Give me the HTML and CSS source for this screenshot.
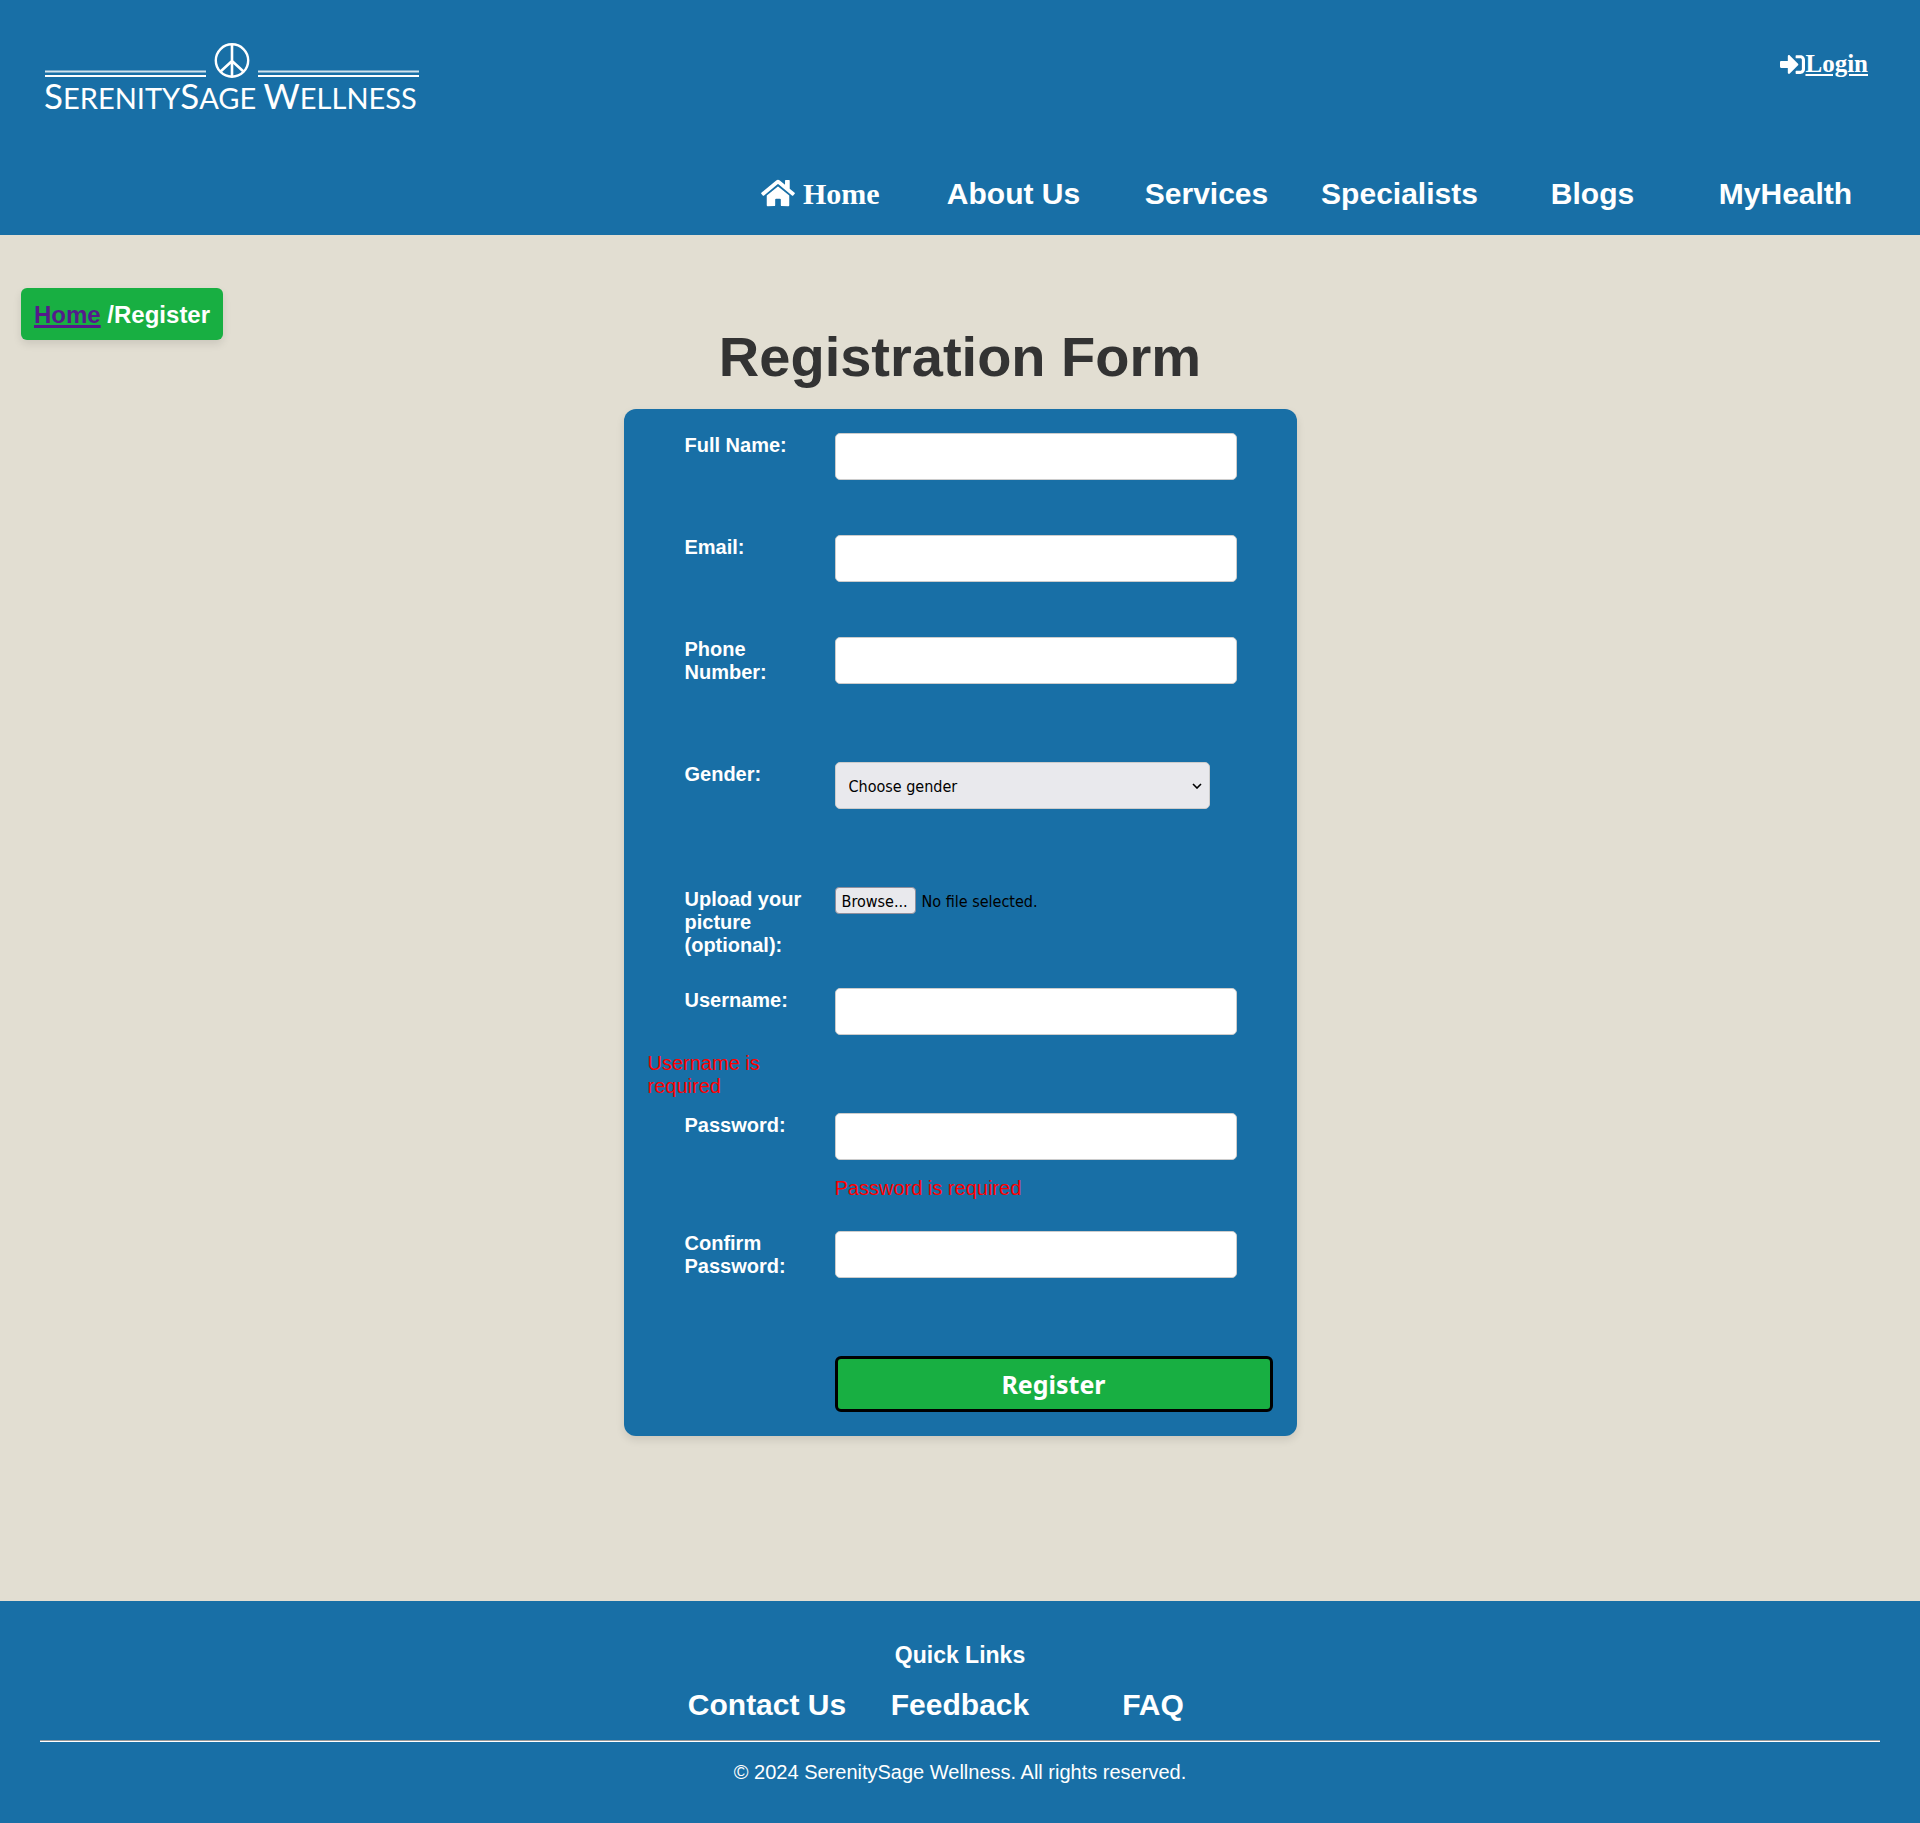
FILE: index.html
```html
<!DOCTYPE html>
<html lang="en">
<head>
<meta charset="utf-8">
<meta name="viewport" content="width=device-width, initial-scale=1">
<title>Register - SerenitySage Wellness</title>
<link rel="stylesheet" href="styles.css">
</head>
<body>
<header class="site-header">
  <div class="header-top">
    <a class="logo" href="#" aria-label="SerenitySage Wellness">
      <svg width="376" height="72" viewBox="0 0 376 72">
        <g fill="none" stroke="#fff">
          <path d="M0 28.5H161M213 28.5H374" stroke-width="2" opacity=".8"/>
          <path d="M0 33H161M213 33H374" stroke-width="2"/>
          <circle cx="187" cy="17.500" r="16.200" stroke-width="2.400"/>
          <path d="M187 1V34M187 18L175 29M187 18L199 29" stroke-width="2.600"/>
        </g>
        <text class="logo-text" x="-1" y="66"><tspan class="logo-cap">S</tspan>ERENITY<tspan class="logo-cap">S</tspan>AGE <tspan class="logo-cap">W</tspan>ELLNESS</text>
      </svg>
    </a>
    <a class="login" href="#"><svg class="login-icon" viewBox="0 0 512 512"><path d="M416 448h-84c-6.600 0-12-5.400-12-12v-40c0-6.600 5.400-12 12-12h84c17.700 0 32-14.300 32-32V160c0-17.700-14.300-32-32-32h-84c-6.600 0-12-5.400-12-12V76c0-6.600 5.400-12 12-12h84c53 0 96 43 96 96v192c0 53-43 96-96 96zm-47-209L201 71c-15-15-41-4.500-41 17v96H24c-13.300 0-24 10.700-24 24v96c0 13.300 10.700 24 24 24h136v96c0 21.500 26 32 41 17l168-168c9.300-9.400 9.300-24.600 0-34z"/></svg><span class="login-text">Login</span></a>
  </div>
  <nav>
    <ul class="nav-list header-nav">
      <li><a class="nav-link nav-home" href="#"><svg class="home-icon" viewBox="0 0 576 512"><path d="M280.370 148.260L96 300.110V464a16 16 0 0 0 16 16l112.060-.290a16 16 0 0 0 15.920-16V368a16 16 0 0 1 16-16h64a16 16 0 0 1 16 16v95.640a16 16 0 0 0 16 16.050L464 480a16 16 0 0 0 16-16V300L295.670 148.260a12.190 12.190 0 0 0-15.300 0zM571.600 251.470L488 182.560V44.050a12 12 0 0 0-12-12h-56a12 12 0 0 0-12 12v72.610L318.470 43a48 48 0 0 0-61 0L4.340 251.470a12 12 0 0 0-1.600 16.900l25.500 31A12 12 0 0 0 45.150 301l235.220-193.740a12.190 12.190 0 0 1 15.300 0L530.900 301a12 12 0 0 0 16.900-1.600l25.500-31a12 12 0 0 0-1.700-16.930z"/></svg> Home</a></li>
      <li><a class="nav-link" href="#">About Us</a></li>
      <li><a class="nav-link" href="#">Services</a></li>
      <li><a class="nav-link" href="#">Specialists</a></li>
      <li><a class="nav-link" href="#">Blogs</a></li>
      <li><a class="nav-link" href="#">MyHealth</a></li>
    </ul>
  </nav>
</header>

<main class="page">
  <nav class="breadcrumb" aria-label="Breadcrumb"><a class="breadcrumb-link" href="#">Home</a> /Register</nav>
  <section class="content">
    <h1 class="title">Registration Form</h1>
    <form class="card">
      <div class="field">
        <label class="label" for="fullname">Full Name:</label>
        <input class="input" type="text" id="fullname">
      </div>
      <p class="message"></p>
      <div class="field">
        <label class="label" for="email">Email:</label>
        <input class="input" type="email" id="email">
      </div>
      <p class="message"></p>
      <div class="field">
        <label class="label" for="phone">Phone Number:</label>
        <input class="input" type="tel" id="phone">
      </div>
      <p class="message message-double"></p>
      <div class="field">
        <label class="label" for="gender">Gender:</label>
        <div class="select-wrap">
          <select class="select" id="gender">
            <option>Choose gender</option>
            <option>Female</option>
            <option>Male</option>
          </select>
          <svg class="select-arrow" viewBox="0 0 10 6"><path d="M1 1L5 5L9 1" fill="none" stroke="#000" stroke-width="1.600"/></svg>
        </div>
      </div>
      <p class="message message-double"></p>
      <div class="field">
        <label class="label" for="picture">Upload your picture (optional):</label>
        <div class="file">
          <input class="file-input" type="file" id="picture">
          <span class="file-button">Browse...</span>
          <span class="file-name">No file selected.</span>
        </div>
      </div>
      <p class="message message-none"></p>
      <div class="field">
        <label class="label" for="username">Username:</label>
        <input class="input" type="text" id="username">
      </div>
      <p class="message message-double">Username is required</p>
      <div class="field">
        <label class="label" for="password">Password:</label>
        <input class="input" type="password" id="password">
      </div>
      <p class="message message-right">Password is required</p>
      <div class="field">
        <label class="label" for="confirm">Confirm Password:</label>
        <input class="input" type="password" id="confirm">
      </div>
      <p class="message message-double"></p>
      <div class="field">
        <button class="submit" type="submit">Register</button>
      </div>
    </form>
  </section>
</main>

<footer class="site-footer">
  <h3 class="footer-title">Quick Links</h3>
  <ul class="nav-list footer-nav">
    <li><a class="nav-link" href="#">Contact Us</a></li>
    <li><a class="nav-link" href="#">Feedback</a></li>
    <li><a class="nav-link" href="#">FAQ</a></li>
  </ul>
  <hr class="rule">
  <p class="copyright">© 2024 SerenitySage Wellness. All rights reserved.</p>
</footer>
</body>
</html>
```
FILE: styles.css
```css
:root {
  --blue: #186fa6;
  --green: #18af42;
  --sand: #e2ded2;
}

* {
  box-sizing: border-box;
}

body {
  margin: 0;
  background: var(--sand);
  color: #fff;
  font: 20px/23px "Liberation Sans", Arial, sans-serif;
}

/* Header */

.site-header {
  padding: 43px 38px 23px 45px;
  background: var(--blue);
}

.header-top {
  display: flex;
  justify-content: space-between;
  align-items: flex-start;
  height: 133px;
}

.logo svg {
  display: block;
  overflow: visible;
}

.logo-text {
  fill: #fff;
  font: 29px Lato, sans-serif;
}

.logo-cap {
  font-size: 35px;
}

.login {
  display: flex;
  align-items: center;
  margin: 7px 14px 0 0;
  color: #fff;
  font: bold 25px/28px "Liberation Serif", "Times New Roman", serif;
  text-decoration: none;
}

.login-text {
  text-decoration: underline;
}

.login-icon {
  width: 25px;
  height: 25px;
  fill: #fff;
}

.nav-list {
  display: flex;
  margin: 0;
  padding: 0;
  list-style: none;
}

.nav-list li {
  width: 193px;
  text-align: center;
}

.header-nav {
  justify-content: flex-end;
}

.footer-nav {
  justify-content: center;
}

.nav-link {
  color: #fff;
  font-size: 30px;
  font-weight: bold;
  line-height: 36px;
  text-decoration: none;
}

.nav-home {
  font-family: "Liberation Serif", "Times New Roman", serif;
}

.home-icon {
  width: 34px;
  height: 30px;
  fill: #fff;
  vertical-align: -4px;
}

/* Page */

.page {
  display: grid;
  grid-template-columns: 1fr minmax(0, 673px) 1fr;
}

.breadcrumb {
  justify-self: start;
  align-self: start;
  margin: 53px 0 0 21px;
  padding: 13px 13px 11px;
  border-radius: 6px;
  background: var(--green);
  box-shadow: 0 4px 8px rgba(0, 0, 0, 0.1);
  font-size: 24px;
  font-weight: bold;
  line-height: 28px;
  white-space: nowrap;
}

.breadcrumb-link {
  color: #551a8b;
  text-decoration-thickness: 3px;
}

.content {
  padding: 90px 0 165px;
}

.title {
  margin: 0 0 20px;
  color: #333;
  font-size: 56px;
  line-height: 64px;
  text-align: center;
}

.card {
  display: flex;
  flex-direction: column;
  gap: 16px;
  padding: 24px;
  border-radius: 12px;
  background: var(--blue);
  box-shadow: 0 4px 8px rgba(0, 0, 0, 0.1);
}

.field {
  display: grid;
  grid-template-columns: 162px 1fr;
  column-gap: 25px;
  align-items: start;
}

.label {
  margin-bottom: -1px;
  padding: 1px 0 0 37px;
  font-weight: bold;
}

.input,
.select {
  height: 47px;
  padding: 2px 13px 0;
  border: 1px solid #ccc;
  border-radius: 5px;
  background: #fff;
  color: #000;
  font: 16px "DejaVu Sans Condensed", "DejaVu Sans", sans-serif;
}

.input {
  width: 402px;
  max-width: 100%;
}

.select-wrap {
  position: relative;
  width: 375px;
  max-width: 100%;
}

.select {
  display: block;
  width: 100%;
  background: #e9e9ed;
  appearance: none;
}

.select-arrow {
  position: absolute;
  top: 21px;
  right: 8px;
  width: 10px;
  height: 6px;
}

.file {
  display: flex;
  position: relative;
  align-items: center;
  gap: 6px;
  color: #000;
  font: 16px/23px "DejaVu Sans Condensed", "DejaVu Sans", sans-serif;
}

.file-input {
  position: absolute;
  inset: 0;
  width: 100%;
  opacity: 0;
}

.file-button {
  padding: 2px 7px 0 6px;
  border: 1px solid #8f8f9d;
  border-radius: 4px;
  background: #e9e9ed;
}

.file-name {
  padding-top: 2px;
}

.message {
  width: 162px;
  height: 23px;
  margin: 0;
  padding-top: 1px;
  color: #f00;
}

.message-double {
  height: 46px;
}

.message-none {
  height: 0;
  padding: 0;
}

.message-right {
  width: auto;
  height: 39px;
  margin-left: 187px;
}

.submit {
  grid-column: 2;
  height: 56px;
  border: 3px solid #000;
  border-radius: 6px;
  background: var(--green);
  color: #fff;
  font: bold 25px "Noto Sans", sans-serif;
}

/* Footer */

.site-footer {
  padding: 40px 40px 39px;
  background: var(--blue);
  text-align: center;
}

.footer-title {
  margin: 0 0 18px;
  font-size: 23px;
  line-height: 28px;
}

.rule {
  height: 2px;
  margin: 17px 0 19px;
  border: 0;
  border-top: 1px solid #9a9a9a;
  background: #fff;
}

.copyright {
  margin: 0;
}
```
